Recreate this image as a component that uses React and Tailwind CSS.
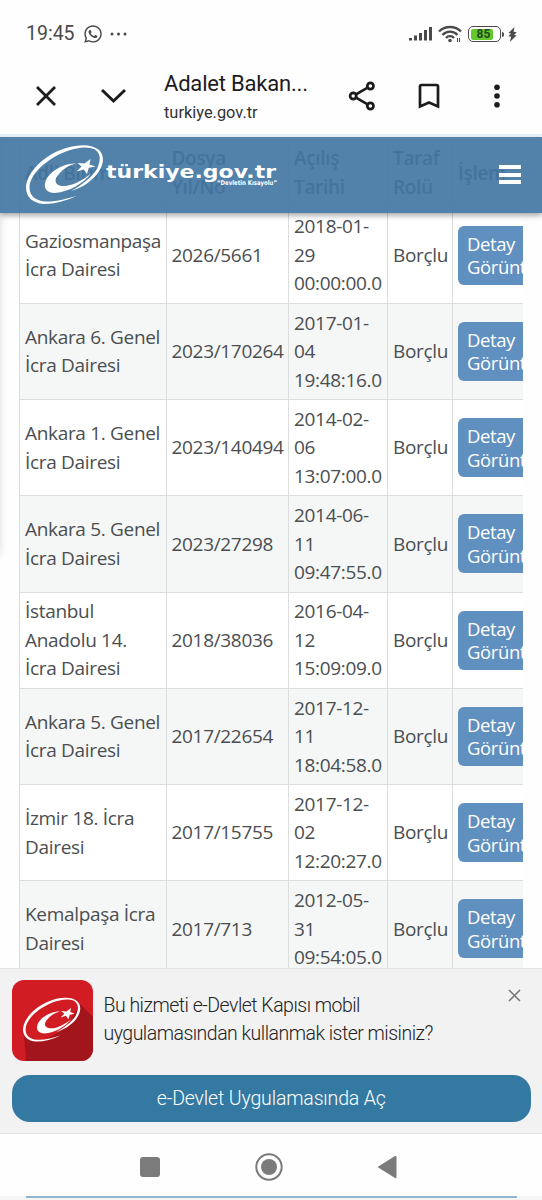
import { FaWhatsapp } from 'react-icons/fa';

const ROWS = [
  { unit: ['Gaziosmanpaşa', 'İcra Dairesi'], file: '2026/5661', date: ['2018-01-', '29', '00:00:00.0'] },
  { unit: ['Ankara 6. Genel', 'İcra Dairesi'], file: '2023/170264', date: ['2017-01-', '04', '19:48:16.0'] },
  { unit: ['Ankara 1. Genel', 'İcra Dairesi'], file: '2023/140494', date: ['2014-02-', '06', '13:07:00.0'] },
  { unit: ['Ankara 5. Genel', 'İcra Dairesi'], file: '2023/27298', date: ['2014-06-', '11', '09:47:55.0'] },
  { unit: ['İstanbul', 'Anadolu 14.', 'İcra Dairesi'], file: '2018/38036', date: ['2016-04-', '12', '15:09:09.0'] },
  { unit: ['Ankara 5. Genel', 'İcra Dairesi'], file: '2017/22654', date: ['2017-12-', '11', '18:04:58.0'] },
  { unit: ['İzmir 18. İcra', 'Dairesi'], file: '2017/15755', date: ['2017-12-', '02', '12:20:27.0'] },
  { unit: ['Kemalpaşa İcra', 'Dairesi'], file: '2017/713', date: ['2012-05-', '31', '09:54:05.0'] },
];

const HEADERS = [['Adli Birim'], ['Dosya', 'Yıl/No'], ['Açılış', 'Tarihi'], ['Taraf', 'Rolü'], ['İşlem']];

const GRID = 'grid grid-cols-[146.5px_122.5px_99px_65px_71px]';
const CELL = 'flex flex-col justify-center border-l border-[#dcdede] pl-[5px] whitespace-nowrap';

function Lines({ items }) {
  return items.map((t) => <span key={t} className="block">{t}</span>);
}

function Emblem({ className }) {
  return (
    <svg viewBox="0 0 90 72" className={className} fill="currentColor">
      {/* orbit ring with its open tail */}
      <path
        fillRule="evenodd"
        d="M55 56.5 C44 62 33 65 22 65 C10 64 4 58 4 48 C5 35 18 20 36 12 C52 5 69 4 77 11 C86 20 79 36 62 46.5 C57 49 53 51 49 52 C60 46 70 38 75 30 C79 21 79 15 73 10.5 C66 6.5 52 8.5 39 14.5 C22 22.5 8 36 7.5 48 C7.5 57 13 61.5 23 62.5 C33 63 45 60 55 56.5 Z"
      />
      <path d="M54 24.5 C44 24 31 30 25 39 C20 48 24 54 33 54 C47 53 62 44 69 34.5 C60 42 48 48 40 47 C32 46 32 40 37 35 C41 30 47 26 54 24.5 Z" />
      <path d="M68.5 20 L67.5 25.4 L73.5 27.5 L66.8 28.8 L65 35 L61.8 30.4 L54.5 32.5 L59.6 27.6 L55.5 24 L62.4 24.6 Z" />
    </svg>
  );
}

function StatusBar() {
  return (
    <div className="flex h-[68px] items-center justify-between pl-[26px] pr-[25px] text-[#4a4a4a]">
      <div className="flex items-center">
        <span className="w-[57px] text-[19.5px]">19:45</span>
        <FaWhatsapp className="size-[20px]" />
        <svg viewBox="0 0 18 4" className="ml-[7px] h-1 w-[18px]" fill="currentColor">
          <circle cx="2" cy="2" r="1.5" /><circle cx="8.5" cy="2" r="1.5" /><circle cx="15" cy="2" r="1.5" />
        </svg>
      </div>
      <div className="flex items-center">
        <svg viewBox="0 0 24 16" className="h-4 w-6" fill="currentColor">
          <path d="M0 12h3v2.5H0z M5 9.5h3v5H5z M10 7h3v7.5h-3z M15 4h3v10.5h-3z M20 1h3v13.5h-3z" />
        </svg>
        <svg viewBox="0 0 24 18" className="ml-[5px] h-[18px] w-6" fill="none" stroke="currentColor" strokeWidth="2.3">
          <path d="M1 6.5 C7 0.5 17 0.5 23 6.5 M4.5 10 C8.5 5.5 15.5 5.5 19.5 10 M8 13 C10 10.5 14 10.5 16 13" />
          <circle cx="12" cy="15.5" r="1.8" fill="currentColor" stroke="none" />
          <path d="M19.5 13v4 M21.5 13v4" strokeWidth="1" />
        </svg>
        <div className="ml-[6px] flex h-4 w-[33px] items-center rounded-[5px] border-[1.5px] border-[#4a4a4a] p-[1.5px]">
          <div className="flex h-full w-[22px] items-center justify-center rounded-[2px] bg-[#62c92d] pl-1 text-[12px] font-bold leading-none text-[#264a1c]">85</div>
        </div>
        <div className="ml-px h-[5px] w-[2px] rounded-r bg-[#4a4a4a]" />
        <svg viewBox="0 0 9 15" className="ml-[4px] h-[15px] w-[9px]" fill="currentColor">
          <path d="M6.5 0 L0.5 6 L3 6.6 L0.3 9.3 L3.2 9.8 L1.8 15 L8.5 8.6 L6 8 L8.7 5.2 L5.6 4.7 Z" />
        </svg>
      </div>
    </div>
  );
}

function BrowserBar() {
  return (
    <div className="flex h-[68px] items-start border-b-2 border-[#e4eff6] text-[#1c1c1e]">
      <svg viewBox="0 0 22 22" className="ml-[35px] mt-[17px] size-[22px]" fill="none" stroke="currentColor" strokeWidth="2.8">
        <path d="M2 2 L20 20 M20 2 L2 20" />
      </svg>
      <svg viewBox="0 0 28 18" className="ml-[43px] mt-[19px] h-[18px] w-7" fill="none" stroke="currentColor" strokeWidth="3">
        <path d="M2 3 L13.5 14 L25 3" />
      </svg>
      <div className="ml-9 w-[184px]">
        <div className="mt-[2px] text-[22px] leading-7 tracking-[-0.2px]">Adalet Bakan...</div>
        <div className="text-[16.4px] leading-[29px] text-[#333]">turkiye.gov.tr</div>
      </div>
      <svg viewBox="0 0 28 30" className="mt-[13px] h-[30px] w-7" fill="none" stroke="currentColor" strokeWidth="2.7">
        <circle cx="5.2" cy="15" r="3.1" />
        <circle cx="22.4" cy="5" r="3.1" />
        <circle cx="22.4" cy="25" r="3.1" />
        <path d="M8 13.3 L19.6 6.6 M8 16.7 L19.6 23.4" />
      </svg>
      <svg viewBox="0 0 22 28" className="ml-[42px] mt-[14px] h-7 w-[22px]" fill="none" stroke="currentColor" strokeWidth="2.7">
        <path d="M2 24.5 V4.5 Q2 3 3.5 3 H18.5 Q20 3 20 4.5 V24.5 L11 20.5 Z" />
      </svg>
      <svg viewBox="0 0 6 24" className="ml-[54px] mt-4 h-6 w-1.5" fill="currentColor">
        <circle cx="3" cy="3.3" r="2.8" /><circle cx="3" cy="12" r="2.8" /><circle cx="3" cy="20.7" r="2.8" />
      </svg>
    </div>
  );
}

function SiteHeader() {
  return (
    <div className="absolute inset-x-0 top-[1px] flex h-[76px] items-center bg-[#4376a3]/92 text-white shadow-[0_2px_6px_rgba(0,0,0,0.4)]">
      <Emblem className="ml-[22px] h-[72px] w-[90px] shrink-0" />
      <svg viewBox="0 0 172 32" className="-ml-[6px] h-8 w-[172px]" fill="currentColor">
        <text x="0" y="18.5" textLength="170" lengthAdjust="spacingAndGlyphs" className="font-['DejaVu_Sans',sans-serif] text-[17px] font-bold">türkiye.gov.tr</text>
        <text x="111" y="26" textLength="60" lengthAdjust="spacingAndGlyphs" className="font-['DejaVu_Sans',sans-serif] text-[6.5px] font-bold">“Devletin Kısayolu”</text>
      </svg>
      <div className="-mt-px ml-auto mr-[21px] flex w-[22px] flex-col gap-[3.5px]">
        <div className="h-[4px] bg-white" />
        <div className="h-[4px] bg-white" />
        <div className="h-[4px] bg-white" />
      </div>
    </div>
  );
}

function CaseTable() {
  return (
    <div className="ml-[19px] w-[504px] overflow-hidden pt-[3px] font-['Open_Sans',sans-serif] text-[19px] leading-[28.5px] tracking-[-0.32px] text-[#4b4e50]">
      <div className={`${GRID} h-[67.6px] font-semibold`}>
        {HEADERS.map((h) => <div key={h[0]} className={CELL}><Lines items={h} /></div>)}
      </div>
      {ROWS.map((r, i) => (
        <div key={r.file} className={`${GRID} h-[96.25px] border-t border-[#dcdede] ${i % 2 ? 'bg-[#f5f7f7]' : 'bg-white'}`}>
          <div className={CELL}><Lines items={r.unit} /></div>
          <div className={CELL}>{r.file}</div>
          <div className={CELL}><Lines items={r.date} /></div>
          <div className={CELL}>Borçlu</div>
          <div className={CELL}>
            <button className="h-[59px] w-[110px] rounded-[6px] bg-[#6090bf] pl-[9px] text-left text-[18.5px] leading-[23.5px] tracking-[-0.4px] text-white">
              Detay<br />Görüntüle
            </button>
          </div>
        </div>
      ))}
    </div>
  );
}

function AppIcon() {
  return (
    <div className="grid size-[81px] shrink-0 overflow-hidden rounded-[12px] text-white">
      <svg viewBox="0 0 81 81" className="col-start-1 row-start-1 size-full">
        <rect width="81" height="81" fill="#d01c22" />
        <path d="M12 55 L14 81 H81 V37 L68 24 L55 47 L30 62 Z" fill="#a3151c" />
      </svg>
      <Emblem className="col-start-1 row-start-1 ml-[8px] mt-[13px] h-[54px] w-[67px]" />
    </div>
  );
}

function AppBanner() {
  return (
    <div className="h-[166px] border-y border-[#e4e4e4] bg-[#f2f2f2] pl-[11.5px] pr-[11px] pt-[10.5px]">
      <div className="flex">
        <AppIcon />
        <p className="ml-[11px] mt-[12px] grow text-[19.5px] font-light leading-[28px] tracking-[-0.51px] text-[#222]">
          Bu hizmeti e-Devlet Kapısı mobil<br />uygulamasından kullanmak ister misiniz?
        </p>
        <svg viewBox="0 0 13 13" className="mr-[10px] mt-[9px] size-[13px]" fill="none" stroke="#777" strokeWidth="1.6">
          <path d="M1 1 L12 12 M12 1 L1 12" />
        </svg>
      </div>
      <button className="mt-[14px] flex h-[47.5px] w-full items-center justify-center rounded-[18px] bg-[#3479a2] text-[19.5px] font-light tracking-[-0.15px] text-white">
        e-Devlet Uygulamasında Aç
      </button>
    </div>
  );
}

function NavBar() {
  return (
    <div className="flex h-[62px] items-center text-[#7b7b7b]">
      <div className="ml-[140px] mt-1 size-5 rounded-[3px] bg-[#7b7b7b]" />
      <svg viewBox="0 0 28 28" className="ml-[95px] mt-1 size-7" fill="none" stroke="currentColor" strokeWidth="2">
        <circle cx="14" cy="14" r="12.7" />
        <circle cx="14" cy="14" r="8" fill="currentColor" stroke="none" />
      </svg>
      <svg viewBox="0 0 20 24" className="ml-[94px] mt-1 h-6 w-5" fill="currentColor">
        <path d="M0.5 12 L18 1 Q19.5 0.5 19.5 2 V22 Q19.5 23.5 18 23 Z" />
      </svg>
    </div>
  );
}

export default function App() {
  return (
    <div className="flex h-[1200px] w-[542px] flex-col overflow-hidden bg-[#fefefe] font-[Roboto,sans-serif]">
      <StatusBar />
      <BrowserBar />
      <div className="relative h-[832px] overflow-hidden">
        <div className="absolute -left-5 top-0 h-[422px] w-5 rounded-full shadow-[0_0_8px_rgba(0,0,0,0.15)]" />
        <CaseTable />
        <SiteHeader />
      </div>
      <AppBanner />
      <NavBar />
      <div className="flex grow bg-[#f5f5f5]">
        <div className="ml-[26px] h-[1.5px] w-[491px] bg-[#8fb5ca]" />
      </div>
    </div>
  );
}
